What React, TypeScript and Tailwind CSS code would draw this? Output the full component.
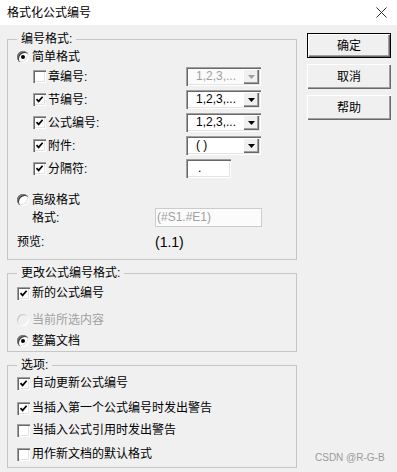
import clsx from "clsx";
import { ReactNode } from "react";

const sunken =
  "shadow-[inset_1px_1px_0_#a0a0a0,inset_2px_2px_0_#696969,inset_-1px_-1px_0_#ffffff,inset_-2px_-2px_0_#e3e3e3]";
const raised =
  "shadow-[inset_1px_1px_0_#ffffff,inset_-1px_-1px_0_#696969,inset_-2px_-2px_0_#a0a0a0]";

const CheckBox = ({ checked }: { checked?: boolean }) => (
  <span
    className={clsx(
      "w-[13px] h-[13px] bg-white shrink-0 flex items-center justify-center",
      sunken
    )}
  >
    {checked && (
      <svg width="9" height="9" viewBox="0 0 9 9">
        <path d="M1.5 4.2 L3.6 6.4 L7.6 1.8" stroke="#000" strokeWidth="1.7" fill="none" />
      </svg>
    )}
  </span>
);

const Radio = ({ checked, disabled }: { checked?: boolean; disabled?: boolean }) => (
  <span
    className={clsx(
      "w-[12px] h-[12px] rounded-full shrink-0 flex items-center justify-center",
      disabled
        ? "bg-[#f0f0f0] shadow-[inset_1px_1px_0_#c8c8c8,inset_-1px_-1px_0_#ffffff]"
        : "bg-white shadow-[inset_1px_1px_0_#808080,inset_2px_2px_0_#404040,inset_-1px_-1px_0_#ffffff,inset_-2px_-2px_0_#e3e3e3]"
    )}
  >
    {checked && <span className="w-[4px] h-[4px] rounded-full bg-black" />}
  </span>
);

const Combo = ({ value, disabled }: { value: string; disabled?: boolean }) => (
  <div
    className={clsx(
      "w-[75px] h-[19px] flex items-center",
      sunken,
      disabled ? "bg-[#fbfbfb] text-[#a0a0a0]" : "bg-white text-black"
    )}
  >
    <span className="flex-1 pl-[10px] leading-[15px]">{value}</span>
    <span
      className={clsx(
        "w-[16px] h-[15px] mr-[2px] bg-[#f0f0f0] flex items-center justify-center",
        raised
      )}
    >
      <svg width="7" height="4" viewBox="0 0 7 4">
        <path d="M0 0 H7 L3.5 4 Z" fill={disabled ? "#a0a0a0" : "#000"} />
      </svg>
    </span>
  </div>
);

const Button = ({ label, isDefault }: { label: string; isDefault?: boolean }) => (
  <div
    className={clsx(
      "w-[84px] h-[25px] bg-[#f0f0f0] flex items-center justify-center",
      isDefault
        ? "border border-black shadow-[inset_1px_1px_0_#ffffff,inset_-1px_-1px_0_#696969,inset_-2px_-2px_0_#a0a0a0]"
        : raised
    )}
  >
    {label}
  </div>
);

const Group = ({ title, className, children }: { title: string; className?: string; children: ReactNode }) => (
  <fieldset className={clsx("border border-[#c6c6c6] pl-[9px]", className)}>
    <legend className="ml-[0px] px-[4px] leading-[16px]">{title}</legend>
    {children}
  </fieldset>
);

const NumberRow = ({
  label,
  checked,
  children,
}: {
  label: string;
  checked?: boolean;
  children: ReactNode;
}) => (
  <div className="h-[19px] flex items-center pl-[16px]">
    <div className="w-[153px] flex items-center gap-[2px]">
      <CheckBox checked={checked} />
      <span className="leading-[16px]">{label}</span>
    </div>
    {children}
  </div>
);

const OptionRow = ({
  label,
  checked,
  className,
}: {
  label: string;
  checked?: boolean;
  className?: string;
}) => (
  <div className={clsx("h-[16px] flex items-center gap-[2px]", className)}>
    <CheckBox checked={checked} />
    <span className="leading-[16px]">{label}</span>
  </div>
);

export default function App() {
  return (
    <div className="w-[397px] h-[472px] bg-[#f0f0f0] relative overflow-hidden text-[12px] text-black font-['Liberation_Sans','Noto_Sans_CJK_SC',sans-serif]">
      <div className="h-[25px] bg-white flex items-center justify-between pl-[7px] pr-[10px]">
        <span className="leading-[16px]">格式化公式编号</span>
        <svg width="11" height="11" viewBox="0 0 11 11">
          <path d="M0.5 0.5 L10.5 10.5 M10.5 0.5 L0.5 10.5" stroke="#333" strokeWidth="1" />
        </svg>
      </div>

      <div className="flex pl-[7px] pt-[6px] gap-[10px]">
        <div className="w-[290px] flex flex-col">
          <Group title="编号格式:" className="pb-[8px]">
            <div className="h-[20px] flex items-center gap-[3px]">
              <Radio checked />
              <span className="leading-[16px]">简单格式</span>
            </div>
            <div className="flex flex-col gap-[4px]">
              <NumberRow label="章编号:">
                <Combo value="1,2,3,..." disabled />
              </NumberRow>
              <NumberRow label="节编号:" checked>
                <Combo value="1,2,3,..." />
              </NumberRow>
              <NumberRow label="公式编号:" checked>
                <Combo value="1,2,3,..." />
              </NumberRow>
              <NumberRow label="附件:" checked>
                <Combo value="( )" />
              </NumberRow>
              <NumberRow label="分隔符:" checked>
                <div className={clsx("w-[45px] h-[19px] bg-white flex items-center pl-[12px]", sunken)}>
                  <span className="leading-[15px]">.</span>
                </div>
              </NumberRow>
            </div>
            <div className="h-[16px] mt-[14px] flex items-center gap-[3px]">
              <Radio />
              <span className="leading-[16px]">高级格式</span>
            </div>
            <div className="h-[19px] flex items-center pl-[15px]">
              <span className="w-[123px] leading-[16px]">格式:</span>
              <div className="w-[107px] h-[19px] bg-[#fbfbfb] border border-[#cccccc] flex items-center pl-[1px] text-[#a0a0a0]">
                <span className="leading-[15px]">(#S1.#E1)</span>
              </div>
            </div>
            <div className="h-[18px] mt-[6px] flex items-center">
              <span className="w-[138px] leading-[16px]">预览:</span>
              <span className="text-[14px] leading-[16px]">(1.1)</span>
            </div>
          </Group>

          <Group title="更改公式编号格式:" className="mt-[5px] pb-[2px]">
            <OptionRow label="新的公式编号" checked className="mt-[4px]" />
            <div className="h-[16px] mt-[11px] flex items-center gap-[3px] text-[#a0a0a0]">
              <Radio disabled />
              <span className="leading-[16px]">当前所选内容</span>
            </div>
            <div className="h-[16px] mt-[5px] flex items-center gap-[3px]">
              <Radio checked />
              <span className="leading-[16px]">整篇文档</span>
            </div>
          </Group>

          <Group title="选项:" className="mt-[5px] pb-[5px]">
            <OptionRow label="自动更新公式编号" checked className="mt-[2px]" />
            <OptionRow label="当插入第一个公式编号时发出警告" checked className="mt-[9px]" />
            <OptionRow label="当插入公式引用时发出警告" className="mt-[6px]" />
            <OptionRow label="用作新文档的默认格式" className="mt-[8px]" />
          </Group>
        </div>

        <div className="flex flex-col gap-[6px] mt-[2px]">
          <Button label="确定" isDefault />
          <Button label="取消" />
          <Button label="帮助" />
        </div>
      </div>

      <span className="absolute left-[315px] top-[451px] text-[10px] leading-[14px] text-[#9a9a9a]">
        CSDN @R-G-B
      </span>
    </div>
  );
}
